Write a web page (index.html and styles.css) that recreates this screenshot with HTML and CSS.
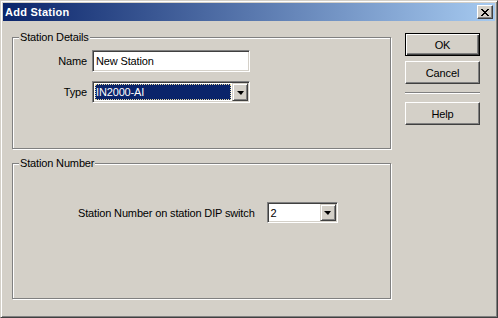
FILE: index.html
```html
<!DOCTYPE html>
<html lang="en">

<head>
    <meta charset="UTF-8" />
    <title>Add Station</title>
    <link rel="stylesheet" href="styles.css">
</head>

<body>
    <div class="window">
        <div class="titlebar">
            <span class="title">Add Station</span>
            <button class="close-btn" aria-label="Close">
                <svg width="8" height="7" viewBox="0 0 8 7">
                    <path d="M0 0h2v1h1v1h2v-1h1v-1h2v1h-1v1h-1v1h-1v1h1v1h1v1h1v1h-2v-1h-1v-1h-2v1h-1v1h-2v-1h1v-1h1v-1h1v-1h-1v-1h-1v-1h-1z" fill="#000" />
                </svg>
            </button>
        </div>

        <div class="content">
            <div class="groups">
                <fieldset class="group details">
                    <legend>Station Details</legend>
                    <div class="form-grid">
                        <label>Name</label>
                        <div class="textbox">New Station</div>

                        <label>Type</label>
                        <div class="combo">
                            <span class="combo-value selected">IN2000-AI</span>
                            <span class="drop-btn"><span class="arrow"></span></span>
                        </div>
                    </div>
                </fieldset>

                <fieldset class="group number">
                    <legend>Station Number</legend>
                    <div class="number-row">
                        <label>Station Number on station DIP switch</label>
                        <div class="combo small">
                            <span class="combo-value">2</span>
                            <span class="drop-btn"><span class="arrow"></span></span>
                        </div>
                    </div>
                </fieldset>
            </div>

            <div class="actions">
                <button class="btn default">OK</button>
                <button class="btn">Cancel</button>
                <div class="separator"></div>
                <button class="btn">Help</button>
            </div>
        </div>
    </div>
</body>

</html>
```

FILE: styles.css
```css
body {
    margin: 0;
    font-family: "Liberation Sans", Arial, sans-serif;
    font-size: 11px;
    letter-spacing: -0.15px;
    color: #000;
    background: #d4d0c8;
}

.window {
    width: 498px;
    height: 318px;
    box-sizing: border-box;
    padding: 2px;
    background: #d4d0c8;
    border: 1px solid;
    border-color: #d4d0c8 #404040 #404040 #d4d0c8;
    box-shadow: inset 1px 1px 0 #fff, inset -1px -1px 0 #808080;
}

/* barra de titulo */
.titlebar {
    height: 18px;
    display: flex;
    align-items: center;
    justify-content: space-between;
    padding: 0 2px;
    background: linear-gradient(to right, #0a246a, #a6caf0);
}

.title {
    color: #fff;
    font-weight: bold;
    font-size: 11px;
    letter-spacing: 0.25px;
}

.close-btn {
    width: 16px;
    height: 14px;
    padding: 0;
    margin: 0;
    display: flex;
    align-items: center;
    justify-content: center;
    background: #d4d0c8;
    border: 1px solid;
    border-color: #fff #404040 #404040 #fff;
    box-shadow: inset -1px -1px 0 #808080;
}

.content {
    display: flex;
    padding: 10px 0 0 9px;
}

.groups {
    width: 379px;
    display: flex;
    flex-direction: column;
}

.group {
    margin: 0;
    padding: 0;
    min-width: 0;
    border: 1px solid #808080;
    box-shadow: 1px 1px 0 #fff, inset 1px 1px 0 #fff;
}

.group legend {
    margin-left: 6px;
    padding: 0 1px 0 1px;
    line-height: 13px;
    background: #d4d0c8;
}

.details {
    height: 118px;
    box-sizing: border-box;
}

.number {
    height: 142px;
    box-sizing: border-box;
    margin-top: 8px;
}

.form-grid {
    display: grid;
    grid-template-columns: 74px 158px;
    column-gap: 5px;
    row-gap: 9px;
    align-items: center;
    padding-top: 6px;
}

.form-grid label {
    text-align: right;
}

.textbox {
    height: 22px;
    box-sizing: border-box;
    padding: 3px 3px 0 3px;
    background: #fff;
    border: 1px solid;
    border-color: #808080 #fff #fff #808080;
    box-shadow: inset 1px 1px 0 #404040, inset -1px -1px 0 #d4d0c8;
    line-height: 15px;
}

.combo {
    height: 22px;
    box-sizing: border-box;
    display: flex;
    padding: 1px;
    background: #fff;
    border: 1px solid;
    border-color: #808080 #fff #fff #808080;
    box-shadow: inset 1px 1px 0 #404040, inset -1px -1px 0 #d4d0c8;
}

.combo-value {
    flex: 1;
    padding-left: 2px;
    line-height: 18px;
}

.combo-value.selected {
    margin: 1px;
    padding-left: 1px;
    line-height: 16px;
    background: #0a246a;
    color: #fff;
    outline: 1px dotted #e8d9a0;
    outline-offset: -1px;
}

.drop-btn {
    width: 16px;
    box-sizing: border-box;
    display: flex;
    align-items: center;
    justify-content: center;
    background: #d4d0c8;
    border: 1px solid;
    border-color: #d4d0c8 #404040 #404040 #d4d0c8;
    box-shadow: inset 1px 1px 0 #fff, inset -1px -1px 0 #808080;
}

.arrow {
    width: 0;
    height: 0;
    border-left: 4px solid transparent;
    border-right: 3px solid transparent;
    border-top: 4px solid #000;
    margin-top: 1px;
}

.number-row {
    display: flex;
    align-items: center;
    gap: 12px;
    padding: 32px 0 0 65px;
}

.combo.small {
    width: 71px;
    height: 21px;
}

/* botones de la derecha */
.actions {
    display: flex;
    flex-direction: column;
    margin-left: 14px;
    padding-top: 2px;
}

.btn {
    width: 75px;
    height: 23px;
    margin: 0 0 5px 0;
    padding: 0;
    font-family: inherit;
    font-size: 11px;
    letter-spacing: inherit;
    color: #000;
    background: #d4d0c8;
    border: 1px solid;
    border-color: #fff #404040 #404040 #fff;
    box-shadow: inset -1px -1px 0 #808080;
}

.btn.default {
    border: 1px solid #000;
    box-shadow: inset 1px 1px 0 #fff, inset -1px -1px 0 #404040, inset -2px -2px 0 #808080;
}

.separator {
    width: 75px;
    height: 1px;
    margin: 3px 0 8px 0;
    background: #808080;
    border-bottom: 1px solid #fff;
}
```
